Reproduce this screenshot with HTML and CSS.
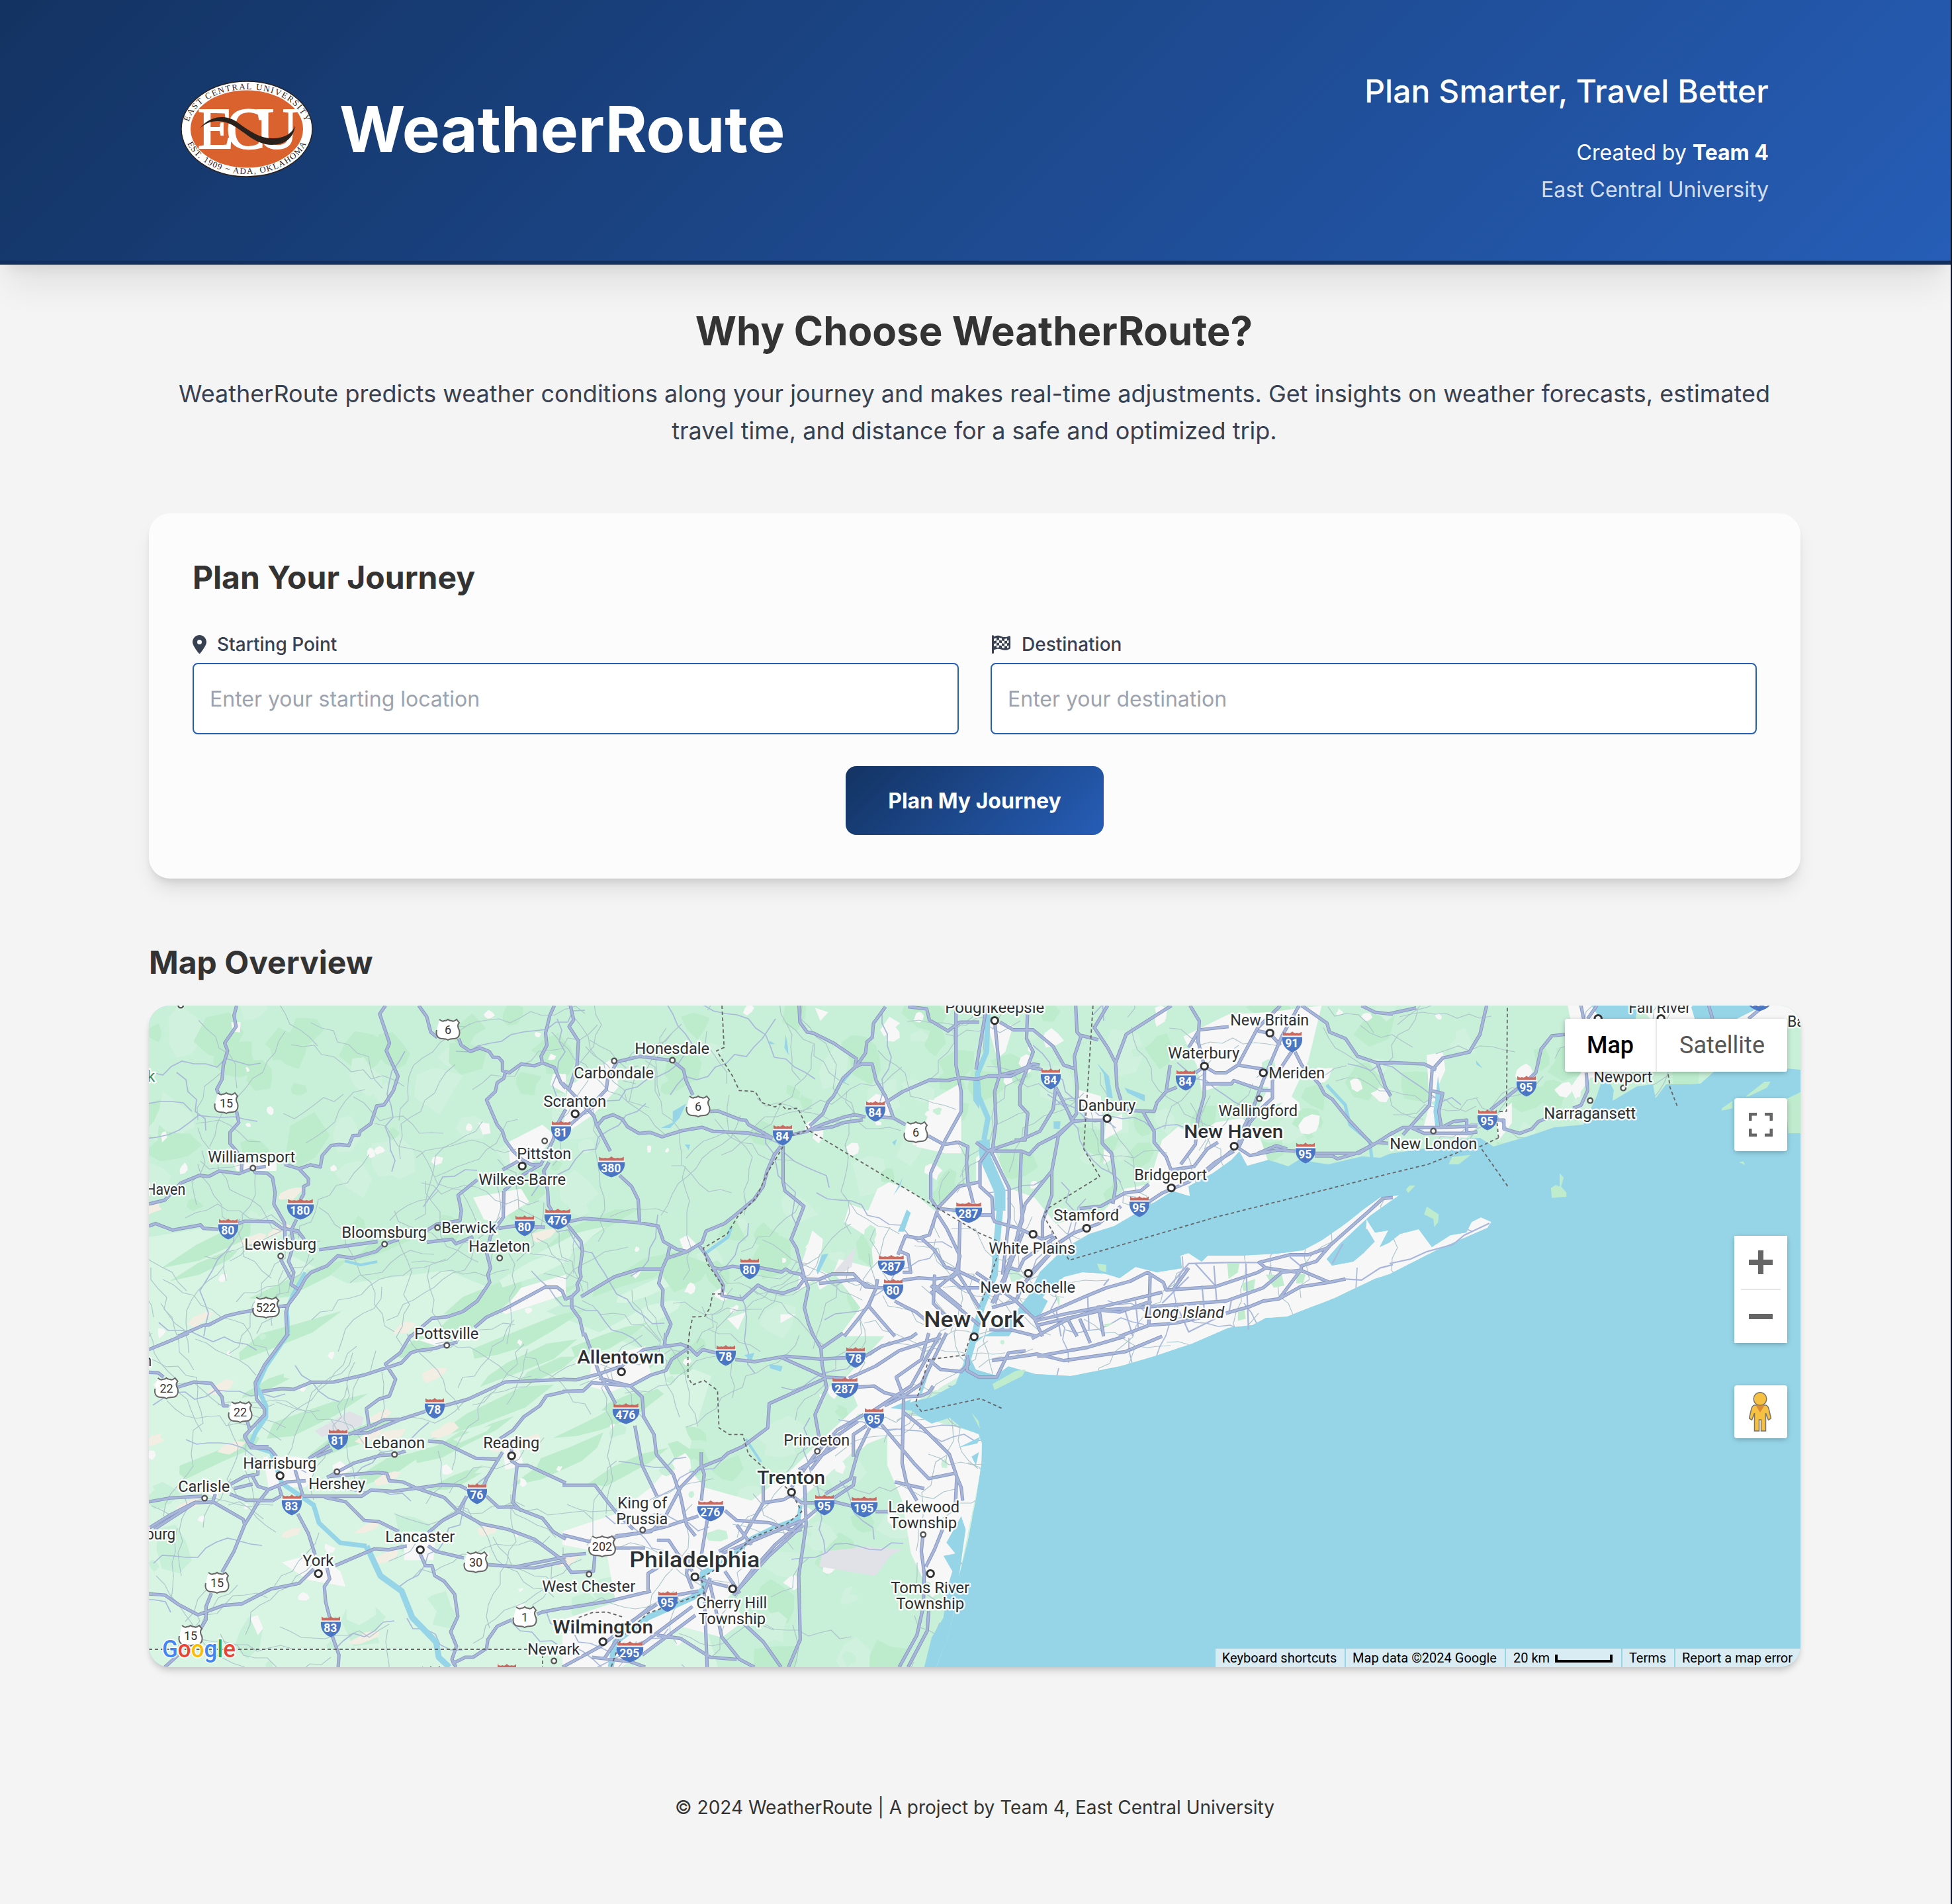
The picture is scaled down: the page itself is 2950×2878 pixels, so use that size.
FILE: index.html
```html
<!DOCTYPE html>
<html lang="en">
<head>
<meta charset="utf-8">
<title>WeatherRoute</title>
<link rel="stylesheet" href="styles.css">
</head>
<body>
<div class="page">
<header class="site-header">
  <div class="header-inner">
    <div class="brand">
      <svg class="seal" viewBox="0 0 200 146" role="img" aria-label="East Central University">
        <defs>
          <path id="arc-top" d="M12 64A89 60 0 0 1 188 64"/>
          <path id="arc-bottom" d="M8 90A95 68 0 0 0 192 90"/>
        </defs>
        <ellipse cx="100" cy="73" rx="99" ry="72" fill="#fff" stroke="#2b211c" stroke-width="1.500"/>
        <ellipse cx="100" cy="73" rx="85" ry="58.500" fill="#d9622f"/>
        <text class="seal-ring"><textPath href="#arc-top" startOffset="50%" textLength="214">EAST CENTRAL UNIVERSITY</textPath></text>
        <text class="seal-ring"><textPath href="#arc-bottom" startOffset="50%" textLength="212">EST. 1909 ~ ADA, OKLAHOMA</textPath></text>
        <g class="seal-letters"><text x="26" y="102">E</text><text x="69" y="102">C</text><text x="114" y="102">U</text></g>
        <path d="M29 72C44 53 68 50 86 63C108 79 122 88 142 87C158 86 168 80 173 68C171 86 158 97 138 97C112 97 94 74 74 65C57 58 42 60 29 72Z" fill="#2b211c"/>
      </svg>
      <h1>WeatherRoute</h1>
    </div>
    <div class="tagline">
      <p class="slogan">Plan Smarter, Travel Better</p>
      <p class="credit">Created by <b>Team 4</b></p>
      <p class="school">East Central University</p>
    </div>
  </div>
</header>
<main>
  <section class="intro">
    <h2>Why Choose WeatherRoute?</h2>
    <p>WeatherRoute predicts weather conditions along your journey and makes real-time adjustments. Get insights on weather forecasts, estimated travel time, and distance for a safe and optimized trip.</p>
  </section>
  <section class="card">
    <h3>Plan Your Journey</h3>
    <div class="fields">
      <div class="field">
        <label for="start"><svg class="pin" viewBox="0 0 384 512"><path d="M215.700 499.200C267 435 384 279.400 384 192C384 86 298 0 192 0S0 86 0 192c0 87.400 117 243 168.300 307.200c12.300 15.300 35.100 15.300 47.400 0zM192 128a64 64 0 1 1 0 128 64 64 0 1 1 0-128z"/></svg>Starting Point</label>
        <input id="start" type="text" placeholder="Enter your starting location">
      </div>
      <div class="field">
        <label for="dest"><svg class="flag" viewBox="0 0 28 28"><path fill-rule="evenodd" d="M0 1.500A1.400 1.400 0 0 1 3 1.500V2.300C8 .2 11 .6 15 2.200C19 3.700 22 3.200 25.500 1.500C27 .8 28 1.600 28 3V19C28 20 27.500 20.600 26.800 21C22 23.400 18.500 23.200 14.500 21.700C10.500 20.300 7.500 20.400 3 22.500V26.500A1.400 1.400 0 0 1 0 26.500ZM3 9.200 7 8V4.200L3 5.400ZM7 8V12L11 11.500V7.600ZM3 13.200V17L7 15.800V12ZM11 11.500V15.400L7 15.800V19L11 18.400V15.400L15 16V12.200ZM11 3.800V7.600L15 8.200V4.800ZM15 8.200V12.200L19 13V9.200ZM19 5.800V9.200L23 8.600V5ZM19 13V16.900L15 16V19L19 20V16.900L23 16.400V12.600ZM23 8.600V12.600L25.500 11.800V7.800ZM23 16.400V20L25.500 19V15.600Z"/></svg>Destination</label>
        <input id="dest" type="text" placeholder="Enter your destination">
      </div>
    </div>
    <button class="submit" type="button">Plan My Journey</button>
  </section>
  <section class="overview">
    <h3>Map Overview</h3>
    <div class="map">
      <svg class="canvas" viewBox="0 0 2496 1000">
        <defs>
          <path id="mainland" d="M0 0H2180L2200 30 2215 60 2230 110 2240 60 2250 0H2330L2345 50 2360 70 2400 20 2440 0H2496V97L2440 92 2373 93 2345 118 2317 119 2293 119 2277 140 2273 119 2249 122 2212 144 2214 128 2200 100 2188 137 2168 180 2124 184 2076 200 2032 213 2012 200 1975 202 1935 215 1875 224 1861 230 1833 228 1782 240 1738 233 1722 243 1692 233 1660 242 1648 220 1636 233 1608 253 1571 273 1573 288 1547 280 1507 305 1459 333 1421 345 1383 367 1346 403 1330 437 1310 463 1282 490 1247 505 1236 528 1219 572 1183 592 1156 598 1125 608 1152 612 1167 623 1183 632 1210 623 1228 638 1254 648 1259 662 1258 692 1250 745 1237 812 1223 868 1216 922 1205 962 1190 1000H0Z"/>
          <path id="island" d="M1300 500 1320 470 1336 457 1358 433 1383 410 1411 403 1443 405 1467 412 1491 395 1523 403 1561 397 1559 378 1571 374 1591 387 1600 378 1652 378 1704 375 1744 370 1772 355 1804 333 1837 307 1861 290 1889 287 1873 298 1845 318 1829 333 1800 360 1780 383 1788 393 1820 387 1837 373 1840 323 1853 343 1873 340 1860 365 1875 358 1891 345 1919 338 1939 365 1967 347 1991 343 1999 327 2013 320 2029 327 2023 336 1947 369 1875 406 1853 413 1792 442 1720 470 1688 472 1668 483 1632 487 1579 510 1520 530 1468 545 1393 560 1340 557 1299 545 1280 559 1250 550 1236 521 1262 500Z"/>
          <clipPath id="land-clip"><use href="#mainland"/><use href="#island"/></clipPath>
          <g id="roads">
            <path transform="matrix(.4018 0 0 .3333 0 -10)" d="M330 30 320 75 328 125 285 200 296 235 280 300 275 365 255 410 270 450M330 510 338 560 305 605 305 655 330 690 350 735 348 780M890 30 868 68 905 200 893 235 937 350 920 415 885 480 857 485 835 565 795 600 790 618 767 620 752 665 715 660 685 665 652 710 645 762 608 752 565 770 600 815 600 840 582 850 582 885 570 910M0 930 60 912 120 835 190 800 225 805 265 780 340 792 391 768 440 760M510 750 565 770M391 768 400 788 445 790 465 810 475 880 470 930 510 1015 512 1090M0 1030 25 1018 45 1028 90 1048 195 1025 205 1040 262 1045M335 1020 360 1008 465 1010 500 1040 560 1052 585 1090M640 1137 860 1100M1045 1103 1140 1090 1155 1110 1220 1078M555 1000 535 1050 545 1110 525 1190 545 1240 535 1295 560 1315M495 1180 535 1270M520 1530 515 1420 525 1385 560 1330 590 1265 610 1240 670 1210 710 1165 765 1175 855 1145 886 1112 940 1090M520 1390 490 1395M395 1412 345 1422 290 1438 225 1478 205 1480 110 1530M1015 30 1045 80 1060 150 1085 175M1165 180 1175 210 1210 238 1245 222 1280 238 1295 265 1315 265 1330 285 1330 325 1355 335 1400 295 1450 303 1480 290 1525 310 1550 380 1568 405M1525 30 1508 75 1492 155 1497 210 1475 260 1480 290M1340 335 1335 360 1310 380 1303 420 1270 458 1310 570 1330 600 1340 640 1370 690 1405 730 1440 752 1470 750M1390 735 1330 775M1235 820 1163 890 1175 960 1170 1005 1085 1020 1045 1050M1335 870 1333 990 1315 1020 1285 1075 1270 1150 1285 1220 1275 1250 1282 1285 1235 1370 1180 1418 1120 1442 1065 1448 985 1530M1315 1040 1375 1030 1490 1035M1568 500 1540 560 1520 640 1475 750 1410 795 1335 870M1505 740 1485 780 1500 870 1503 935 1520 970M1225 1490 1270 1443 1340 1405 1490 1307 1535 1307 1555 1325 1568 1365"/>
            <path transform="matrix(.4018 0 0 .3333 625 -10)" d="M30 30 42 95 25 125 60 190 55 300 25 410M95 500 165 410 170 365 205 285 290 260 413 279 455 320 465 370 490 435M555 510 585 508 670 548 690 550 700 570 790 630M0 380 95 500 20 580M95 500 118 530 130 575 180 690M130 575 155 540 190 525 225 545 245 580 288 610 330 605 375 625 450 597 525 582 565 600 700 608 790 632M865 615 920 600 935 590 975 570 1060 535 1100 525 1140 535M935 595 1015 580 1060 560 1130 548M890 30 893 105 920 150 945 155 1020 200 1105 270 1100 310 1125 295 1165 295 1180 370 1215 440 1235 505 1245 540 1290 570M1375 620 1435 660M1215 35 1170 110 1165 175 1145 195 1140 245 1105 305 1055 360 1020 440 1000 465 980 520 930 575M1215 470 1280 420 1380 368 1450 370 1490 357 1568 365M1200 535 1245 540M830 665 830 830 837 870 908 940 860 1090 880 1130 908 1255 925 1310 910 1400 925 1470 945 1530M820 670 795 710 770 780 755 850 720 910 650 980 610 1018 540 1053 525 1105 470 1145 430 1135 380 1100 360 1030 290 1015 80 995 20 1010M215 800 260 850 285 910 290 1015M20 1025 70 1100 75 1145 65 1230 70 1260 55 1295 60 1320 35 1350 10 1362M35 1350 35 1400 65 1450 80 1530M70 1350 195 1260 290 1225 375 1225M403 1125 395 1170 375 1225 362 1290 378 1320 375 1390 408 1475 390 1530M395 1175 470 1145M515 1120 545 1170 605 1300 600 1345 675 1363 735 1298 770 1320 830 1335 885 1310 910 1270M570 1220 595 1225 640 1212 670 1218M740 1218 825 1238 840 1225 860 1240 895 1248 910 1270 965 1272 1015 1247 1095 1247 1140 1305 1210 1310M965 1290 1105 1272 1160 1305M1280 1275 1340 1265 1400 1270 1470 1260 1490 1235 1568 1280M1480 30 1480 300 1500 420 1500 510 1440 640 1385 790 1385 905 1410 950 1490 960M1410 950 1490 850 1568 830M1410 960 1380 1070 1340 1085 1290 1075 1262 1160M1410 975 1445 1040 1495 1165 1480 1240 1385 1335M1345 1080 1400 1140 1440 1215 1490 1235M1250 1370 1280 1390 1330 1420 1380 1470M1180 1310 1150 1390 1120 1440 1060 1530M1150 1390 1200 1460 1250 1530M1435 660 1490 650 1525 670 1520 740 1525 830 1545 925M1300 35 1370 45 1380 95 1450 145 1495 105 1568 105M1400 1250 1395 1380 1450 1450M1400 1300 1500 1400M1495 1010 1490 1250 1568 1400M1385 1300 1480 1390 1568 1480M1460 1270 1500 1310 1568 1310M1185 1270 1180 1310M1280 1240 1310 1240 1300 1160 1262 1140"/>
            <path transform="matrix(.4018 0 0 .3333 1250 -10)" d="M0 365 45 350 130 350 200 310 250 320M90 345 160 325 215 295 240 300M40 30 0 320M70 98 90 340 70 420 75 560 60 700 125 860 125 990 100 1250M90 105 140 140 215 140 290 215 330 300 370 315M375 30 380 150 395 170 370 260 380 400 378 520 360 550M395 165 460 185M495 30 445 130 495 220 525 290 530 400 545 460M735 30 650 95 565 160 540 240 525 290M300 400 365 555 410 550 475 550 475 655 510 700 520 790 525 850 515 930M365 555 310 620 285 780 285 890 250 1010 250 1080M300 400 290 500 240 600 165 640M195 30 190 180 215 240 165 400 165 480 195 520 185 640 145 640M0 650 45 690 170 690 200 705 235 660 300 620 365 555M45 690 15 740 15 850 60 900 65 1000M165 640 90 670 45 690M555 505 670 510 680 470 715 420 755 400M825 335 860 306 900 335 940 335 985 300 1080 318M625 505 670 600 670 650 715 715 735 780M860 315 858 440 835 540 825 660 770 750M730 300 715 420M805 30 840 100 835 190 859 306M800 220 840 140 950 125M1060 145 1105 156 1145 210M1145 30 1060 130 985 300M1215 30 1150 170 1080 370 1050 470 1020 550 1000 600 985 670M1195 225 1115 370 1115 450 1070 500 1030 560 990 670M1200 240 1225 300 1290 385 1310 430 1340 455 1400 545 1490 660M1225 30 1320 110 1330 150 1390 180 1435 260 1510 290 1568 290M1510 290 1540 400 1560 440M1450 30 1500 60 1568 70M985 675 1030 710 1135 685 1200 690M1060 700 1130 665 1170 680M1275 700 1440 700 1510 650 1568 605M1275 712 1340 712 1360 725 1430 700 1510 650 1550 655M860 385 960 385 970 370 1080 415 1115 415M970 690 900 740 860 780 800 830 700 880 650 920M545 940 460 1020 370 1060 320 1100 200 1250M735 775 820 760 870 680 910 650M870 780 970 680M390 950 470 940 560 880 620 870 650 840M0 980 60 980 70 1010 160 1040 250 1090 290 1070M170 700 165 860 175 1000 150 1100 110 1250 70 1380M285 780 185 930 160 1050 130 1200 60 1380M180 1050 130 1200 90 1340M320 1100 180 1290 150 1370 60 1400M110 1215 160 1230 180 1180 300 1080M220 1460 330 1430 460 1400 580 1365 700 1330M220 1450 410 1350 490 1310 580 1280 645 1240 705 1285 715 1320 900 1305 1060 1240 1090 1220 1065 1195 1180 1160 1250 1160 1320 1130 1480 960 1530 905 1568 900M230 1480 480 1410 660 1395 940 1370 1080 1310 1150 1240 1220 1230 1330 1285 1390 1270M940 1425 1030 1395 1080 1370 1140 1360 1220 1305 1330 1285M1090 1220 1150 1230 1215 1240 1140 1360M1330 1120 1280 1190 1225 1210 1220 1240M460 1390 480 1530M655 1245 650 1480M540 1530 650 1480 750 1470 900 1430M340 1440 380 1530M800 1220 740 1320M210 1540 350 1450 460 1410 540 1420 660 1370M0 1240 60 1290 150 1370 220 1450 250 1530M390 1450 430 1560M50 1500 130 1500 230 1530M230 1620 420 1580 560 1530M60 1640 230 1610 330 1640 560 1600 700 1530"/>
            <path transform="matrix(.4018 0 0 .4464 1875 -10)" d="M0 50 100 30M365 22 340 120 300 180 200 200 160 240 150 360 50 460M0 215 130 220 175 240M660 120 610 125 570 170 550 250 500 290 380 375M0 460 50 435 190 435 330 430M80 435 130 455 290 455 330 450M405 410 430 410 430 440 490 455 535 440 560 415 600 400M155 310 200 320 185 380 195 435 240 415 290 410 290 450M720 22 730 67M780 22 745 67M740 250 745 310 720 360 690 370M1200 22 1215 67M1410 22 1350 67"/>
            <path transform="matrix(.4018 0 0 .3333 0 495)" d="M0 75 150 0M0 178 35 180 55 200M110 245 170 222 235 228 275 290 280 330 300 330M370 400 380 440 360 470 385 520 455 525 480 560M525 0 435 145 400 225 405 300 435 345 435 370 360 465 375 500 400 515 450 515M425 265 500 252 545 255 610 223 695 222 810 190 950 135 985 90 1010 80 1075 70 1160 40M985 10 945 90 890 140 928 210 905 285 865 300 818 342 828 425M600 570 680 510M630 560 690 530M750 460 830 425 885 393 950 390 1040 355M770 455 825 452 940 395M1110 330 1200 300 1340 222 1568 210M1568 265 1495 285 1470 330 1410 380 1370 440 1320 480M1050 490 1105 495 1230 568 1310 572M670 655 770 590 870 555 923 551 965 535M0 765 80 748 200 740M0 885 80 825 170 770 240 765 250 730M20 890 180 765M240 765 355 845 360 870 320 990 275 1085M235 1180 215 1240 215 1300 195 1340M305 730 365 758 465 760 495 740M300 690 360 650 410 640 410 600M390 650 410 695 450 710 520 675 590 670M320 705 390 685M450 710 410 770 360 870M490 700 500 740M680 650 860 632 895 637 905 670 955 675 1010 705 1110 745 1160 805 1250 865 1350 890 1450 935 1568 1040M580 740 800 740 835 712 920 718 1100 688 1170 692 1200 710M660 745 740 765 810 850 865 855 940 900M550 620 580 740M560 820 600 910 625 1005M1270 740 1315 790 1370 788 1480 840 1520 900 1568 935M1385 600 1370 770 1400 805M1330 540 1270 660 1260 690M1195 740 1160 815 1105 850 1050 905M1364 480 1364 580 1390 600 1425 600 1568 680M700 1055 850 978 900 983 970 965M1050 965 1080 990 1185 1020M1275 1050 1380 1060 1568 1015M1380 1062 1450 1065 1568 1035M1020 1000 1040 1055 1065 1055 1075 1100 1110 1125 1150 1185 1162 1285 1135 1355 1157 1420 1140 1480 1155 1515M670 1065 680 1115 660 1150 665 1220 680 1290M690 1375 715 1460 712 1515M0 1183 60 1188 110 1230 185 1278 280 1235 350 1228 460 1160 565 1135 620 1070M60 1515 110 1460M1140 1500 1190 1470 1220 1470 1270 1430 1275 1390 1310 1330 1365 1300M1460 1275 1480 1265 1568 1245"/>
            <path transform="matrix(.4464 0 0 .3333 625 495)" d="M75 0 100 90 125 185 180 320M245 420 270 600 320 740M0 210 45 212 125 185 200 150 275 75 400 50 430 65 455 100 475 75 520 90M350 0 345 60M0 265 70 262 100 225 230 240 300 190 350 170 370 120 430 65M125 205 230 240 270 290 275 380 310 460 318 550 375 640 400 740 420 870 450 920M585 120 650 130 755 105 870 118 960 112M1025 105 1080 60 1180 20 1200 0M845 0 875 70 880 150 895 250 855 370 870 480M875 70 950 0M740 110 890 200 960 205M890 205 700 320 695 430 610 515 560 545 540 570 465 610 400 700 345 840 300 900 180 920M970 205 1060 150 1140 80 1280 20M1000 245 1055 240 1090 270 1150 290 1215 285 1240 270 1255 240M1280 0 1180 240 1060 345M1300 0 1215 230 1150 290 1090 330M1240 0 1215 120 1130 200 1155 290 1155 360 1220 430 1310 550 1335 650 1330 780M1155 290 1150 590 1165 680 1200 760M1080 415 1190 590 1240 660 1330 635 1350 700 1355 760M1040 430 1000 540 975 660 890 730M1030 420 985 460 985 560M1020 370 930 440 850 560 775 700M905 510 840 620M1000 400 925 470 930 510 800 620M470 540 470 600 480 640 470 760M550 805 590 850 700 860 790 900 810 890M775 735 810 770 860 770M920 765 980 785M1060 810 1110 810M820 690 825 870 800 1100 805 1390 765 1515M990 650 985 690 860 800 720 960 640 1080 580 1190M810 850 540 1000M815 870 700 1010 590 1170M0 690 110 690 150 760 180 810 240 890M460 830 345 880 250 910 90 945 0 915M320 940 360 940 390 1000 440 1080M530 990 610 930 680 770 750 755 775 735M680 680 680 770M450 1110 500 1130 560 1150M500 1110 480 1180 490 1515M0 1250 160 1215 300 1170M140 1480 220 1320 320 1230M0 1515 130 1420 300 1240M380 1190 460 1170M500 1140 540 1380 600 1480 650 1515M600 1300 680 1400 740 1515M440 1240 260 1420M270 1460 450 1280M320 1370 400 1385 500 1470 590 1480M1220 920 1215 990 1225 1090 1222 1240 1200 1370 1140 1515M1290 880 1260 980 1230 1060M1240 1260 1235 1350 1170 1515M1125 675 1225 705M100 1470 230 1490 280 1515M0 1010 80 1000M0 1030 30 1085 105 1080 110 1000M1370 120 1370 170 1410 200 1470 200 1510 90 1568 80M1240 120 1280 165 1350 175 1375 140 1370 100M590 870 640 960M490 850 470 1010M550 1080 600 1180M180 975 280 975M430 1000 420 1090 440 1160M290 1170 290 1090 340 1050"/>
          </g>
        </defs>
        <use href="#mainland" fill="#c8efd8"/>
        <g clip-path="url(#land-clip)">
          <path d="M0 350 120 330 300 420 450 400 620 470 850 560 790 760 860 1000H0Z" fill="#d8f4e3"/>
          <g id="terrain"></g>
          <g class="urban">
            <path transform="matrix(.4018 0 0 .3333 625 -10)" d="M1185 860 1230 830 1310 870 1400 960 1480 860 1568 820V1530H1040L1120 1400 1020 1240 1040 1180 1170 1220 1160 1090 1060 1010 1080 930 1150 960ZM1400 450 1500 380 1500 700 1440 700 1330 670ZM1140 470 1180 430 1230 450 1230 540 1150 520ZM20 400 200 260 210 400 120 520 0 620ZM920 560 940 550 945 600 910 600ZM940 1050 980 1090 960 1260 880 1330 900 1200ZM440 1090 470 1070 510 1120 460 1150ZM1195 140 1230 80 1270 110 1210 170ZM950 40 1000 60 970 100ZM620 1450 690 1420 660 1500ZM820 1430 880 1430 820 1470Z"/>
            <path transform="matrix(.4018 0 0 .3333 1250 -10)" d="M0 720 60 660 130 860 220 900 300 1020 480 960 560 860 650 840 700 640 760 580 830 620 900 560 1000 540 1060 600 1100 740 600 1000 330 1150 200 1568H0ZM490 560 550 520 550 590 480 640ZM780 170 950 70 1100 60 1300 30 1250 280 1180 460 1060 500 1100 400 950 380 850 420 830 300ZM380 410 470 440 475 550 410 550ZM40 100 140 120 110 240 80 270ZM480 680 520 720 480 750Z"/>
            <path transform="matrix(.4018 0 0 .4464 1875 -10)" d="M140 190 200 180 210 240 170 320 180 430 330 430 290 470 120 460 150 360ZM670 22H880L760 260 700 340 680 300 720 250ZM400 400 460 350 460 420 410 480ZM940 22H1546V67H980Z"/>
            <path transform="matrix(.4464 0 0 .3333 625 495)" d="M1100 0H1568V180L1340 200 1170 330 1130 450 1000 520 900 640 800 760 860 820 700 1000 560 1200 620 1300 540 1380 400 1330 200 1515H0V1300L180 1220 150 1000 0 960V900L180 820 300 700 340 640 420 600 480 700 640 760 760 640 880 480 1000 330 960 200ZM1100 340 1420 460 1420 600 1340 1120 1300 1150 1250 1200 1180 1000 1150 760 1100 600ZM100 120 280 60 300 190 160 270 90 240Z"/>
            <path transform="matrix(.4018 0 0 .3333 0 495)" d="M430 560 560 560 640 600 590 700 450 700ZM500 1040 620 1000 720 1080 740 1150 600 1120ZM960 900 1080 900 1070 1030 960 1030ZM1330 480 1380 470 1410 600 1340 620ZM690 600 720 580 760 620 700 660ZM180 710 260 700 260 750ZM380 1290 410 1280 430 1340 410 1370ZM1010 30 1130 20 1110 70Z"/>
            <path transform="matrix(.4018 0 0 .3333 0 -10)" d="M1220 900 1400 860 1430 920 1310 1010 1260 1000ZM1350 650 1480 570 1530 620 1440 740 1360 760ZM320 750 480 730 480 780 330 780ZM1330 1420 1400 1310 1568 1250 1568 1340 1340 1430ZM1520 340 1568 340V430L1510 390ZM310 105 345 105 343 152 315 148ZM1240 560 1280 565 1285 610 1255 615Z"/>
          </g>
          <use href="#island" fill="#f7f7f7"/>
          <g id="patches"></g>
          <path fill="#e1e1e8" d="M1018 825 1085 818 1138 822 1120 832 1098 862 1013 848ZM251 643 303 613 325 623 321 635 261 652ZM1036 402 1068 365 1062 395 1040 410Z"/>
          <g id="lanes" class="lanes"></g>
        </g>
        <g fill="#96d5e8">
          <path transform="matrix(.4464 0 0 .3333 625 495)" d="M1350 830 1365 890 1340 1130 1322 1290 1300 1400 1265 1515H1225L1250 1380 1290 1290 1300 1170 1320 1080 1290 1010 1330 1000 1300 950ZM1340 520 1415 470 1405 500ZM1385 560 1410 540 1400 600ZM1110 340 1180 300 1170 350ZM700 140 745 150 740 175 703 160ZM615 100 650 90 640 125Z"/>
          <path transform="matrix(.4018 0 0 .3333 625 -10)" d="M415 510 465 475 440 540 405 585 370 585 415 560ZM840 160 848 220 850 255 835 220ZM1060 350 1095 325 1055 385ZM1545 370 1568 300V500L1545 460ZM955 1230 975 1160 1000 1155 960 1250ZM1245 890 1280 810 1270 850ZM1295 955 1310 970 1285 1055 1262 1055ZM1240 650 1258 635 1250 665ZM460 660 480 660 475 685ZM780 190 800 205 775 205Z"/>
          <path transform="matrix(.4018 0 0 .3333 1250 -10)" d="M455 290 500 350 515 450 495 450 480 340ZM558 402 635 435 635 465 570 425ZM292 555 318 555 315 590 292 588ZM195 1400 220 1330 270 1370 240 1440 200 1440ZM1430 1120 1470 1040 1500 1100 1460 1150Z"/>
          <path transform="matrix(.4018 0 0 .4464 1875 -10)" d="M325 207 350 235 327 222ZM182 260 192 330 185 430 172 430 165 380 175 320Z"/>
        </g>
        <g class="rivers">
          <path stroke-width="8" d="M1268 0 1266 70 1252 103 1254 137 1268 170 1262 203"/>
          <path stroke-width="17" d="M1262 203 1264 230 1286 280 1286 310"/>
          <path stroke-width="10" d="M1286 310 1280 373 1278 407 1258 457 1246 505 1236 540"/>
          <path stroke-width="7" d="M211 495 177 545 163 575 177 605 177 622 161 645 153 665 185 675 201 722 249 755 257 782 289 812 329 817"/>
          <path stroke-width="9" d="M329 817 350 862 382 885 398 925 434 962 438 985 454 1000"/>
          <path stroke-width="5" d="M236 403 217 437 209 457 211 495M1780 120 1808 150 1815 180 1845 205 1848 230M840 375 875 350 880 335"/>
          <path stroke-width="9" d="M698 1000 705 962 754 925 821 895 839 882 837 858 857 848"/>
          <path stroke-width="6" d="M857 848 893 822 911 805 946 788 982 775 985 755"/>
          <path stroke-width="4" d="M296 386 320 392 345 387M1185 535 1175 560 1165 590M902 655 925 690"/>
        </g>
        <g fill="#bfeccd">
          <path transform="matrix(.4018 0 0 .4464 1875 -10)" d="M607 640 625 630 640 635 640 590 655 605 645 635 665 655 665 670 610 674ZM222 560 235 535 305 528 260 560ZM62 645 75 632 97 632 70 657ZM130 730 140 703 185 730 183 755 168 773 165 745ZM1340 330 1410 280 1433 280 1420 300 1350 330ZM1250 370 1290 345 1290 370 1250 378ZM1490 340 1546 315V455L1500 455ZM1315 553 1330 550 1338 562Z"/>
          <path transform="matrix(.4018 0 0 .3333 1250 -10)" d="M945 1200 990 1200 985 1240 950 1270ZM1000 1290 1050 1270 1045 1320 1005 1325ZM1090 1250 1150 1250 1160 1300 1120 1310ZM1205 1240 1240 1250 1230 1290 1205 1290ZM480 1475 515 1470 490 1490ZM455 1200 490 1205 490 1240 465 1230ZM300 1340 315 1360 312 1400ZM985 1420 1010 1410 1015 1450 985 1460Z"/>
          <path d="M1275 572 1310 552 1325 550 1320 560 1278 581ZM1243 615 1256 640 1254 628Z"/>
        </g>
        <path class="minor" d="M1875 390 1907 383 1931 372 1971 361 1988 347 2026 329"/>
        <path class="minor" transform="matrix(.4018 0 0 .3333 1250 -10)" d="M715 1320 800 1200 950 1195 1065 1195M825 1200 900 1300M1015 1200 1025 1500M895 1210 905 1370M420 1350 425 1500M600 1370 610 1490M850 1300 860 1430M755 1390 800 1510 900 1450M700 1380 800 1260M480 1300 500 1270M1390 1270 1450 1275 1520 1220 1568 1205M1380 1110 1340 1200M960 1370 950 1430M300 1400 320 1530M560 1410 590 1530M1180 1170 1230 1220"/>
        <use href="#roads" class="road-edge"/>
        <use href="#roads" class="road-core"/>
        <g class="borders">
          <path transform="matrix(.4018 0 0 .3333 625 -10)" d="M600 30 608 220 580 235 640 350 665 415 725 420 750 470 800 490 820 475 840 500 885 495 925 595 1568 1062 1642 1100M860 620 925 595M830 670 770 790 730 900 660 985 620 1065 530 1130 545 1200 605 1305 600 1338 565 1338 555 1400 535 1440 490 1442 475 1530"/>
          <path transform="matrix(.4464 0 0 .3333 625 495)" d="M430 0 425 60 425 200 440 235 480 215 525 260 530 430 565 460 610 460 630 550 690 620 775 722 810 810 760 865 640 930 560 1040 470 1110 480 1180 290 1270 200 1380 165 1515M1380 20 1360 100 1240 120 1195 320 1215 355 1415 297 1490 343M55 1290 100 1268 150 1265 210 1290"/>
          <path transform="matrix(.4018 0 0 .3333 1250 -10)" d="M440 30 405 680 465 805 270 950 255 985 350 1185 900 990 1555 792 1700 750 1825 690M85 1150 20 1380"/>
          <path transform="matrix(.4018 0 0 .4464 1875 -10)" d="M410 470 340 500 445 635M443 30 440 380 400 382 410 470M1048 255 1055 300 1083 365"/>
          <path d="M0 973H595V1000"/>
        </g>
        <g id="shields"></g>
        <g id="towns" transform="translate(-.8 -.4)"></g>
        <text class="logo" x="20" y="985" textLength="111" lengthAdjust="spacingAndGlyphs"><tspan fill="#4285f4">G</tspan><tspan fill="#ea4335">o</tspan><tspan fill="#fbbc05">o</tspan><tspan fill="#4285f4">g</tspan><tspan fill="#34a853">l</tspan><tspan fill="#ea4335">e</tspan></text>
      </svg>
      <div class="map-type"><button class="active">Map</button><button>Satellite</button></div>
      <button class="tool fullscreen"><svg viewBox="0 0 36 36"><path d="M0 0H12V4.500H4.500V12H0ZM24 0H36V12H31.500V4.500H24ZM0 24H4.500V31.500H12V36H0ZM31.500 24H36V36H24V31.500H31.500Z"/></svg></button>
      <div class="tool zoom">
        <button><svg viewBox="0 0 36 36"><path d="M14 0H22V14H36V22H22V36H14V22H0V14H14Z"/></svg></button>
        <button><svg viewBox="0 0 36 36"><path d="M0 14H36V22H0Z"/></svg></button>
      </div>
      <button class="tool pegman"><svg viewBox="0 0 34 60"><g fill="#f6c143" stroke="#7a7468" stroke-width="1.500"><path d="M9 20H25C28 20 29 22 30 25L33.500 40 29.500 42.500 25.500 32V59H18.500V42H15.500V59H8.500V32L4.500 42.500 .500 40 4 25C5 22 6 20 9 20Z"/><circle cx="17" cy="10.500" r="9.800"/></g><path d="M10.500 20.500H23.500L17 31Z" fill="#dd8a35"/></svg></button>
      <div class="attribution"><span>Keyboard shortcuts</span><span>Map data ©2024 Google</span><span>20 km <i class="scale"></i></span><span>Terms</span><span>Report a map error</span></div>
    </div>
  </section>
</main>
<footer>© 2024 WeatherRoute | A project by Team 4, East Central University</footer>
</div>
<script src="map.js"></script>
</body>
</html>
```

FILE: styles.css
```css
* { box-sizing: border-box; margin: 0; }
body { background: #0b1526; font-family: Inter, sans-serif; color: #333; }
button, input { font-family: inherit; border: 0; }
.page { width: 2948px; height: 2878px; padding-right: 2px; background: #f4f4f4; overflow: hidden; }
.site-header { height: 400px; margin-right: -2px; padding-right: 2px; border-bottom: 6px solid #12305f; background: linear-gradient(135deg, #133362, #265db6); color: #fff; box-shadow: 0 40px 50px -10px rgba(0,0,0,.08), 0 16px 20px -12px rgba(0,0,0,.08); }
.header-inner { width: 2496px; height: 394px; margin: 0 auto; padding: 0 48px; display: flex; justify-content: space-between; align-items: center; }
.brand { display: flex; align-items: center; gap: 40px; padding-bottom: 5px; }
.seal { width: 200px; height: 146px; display: block; }
.seal-ring { font: 13px "Liberation Serif", serif; fill: #2b211c; text-anchor: middle; }
.seal-letters { font: 88px "Liberation Serif", serif; fill: #fff; stroke: #fff; stroke-width: 2px; }
h1 { font-size: 96px; line-height: 96px; font-weight: 700; }
.tagline { text-align: right; padding-top: 22px; font-size: 32px; line-height: 48px; }
.slogan { font-size: 48px; line-height: 64px; font-weight: 500; letter-spacing: .06px; margin-bottom: 37px; }
.school { margin-top: 8px; opacity: .8; }
main { width: 2496px; margin: 0 auto; padding-top: 64px; }
.intro { text-align: center; margin-bottom: 97px; }
.intro h2 { font-size: 60px; line-height: 72px; font-weight: 700; margin-bottom: 31px; margin-right: 2px; }
.intro p { font-size: 36px; line-height: 56px; color: #374151; padding: 0 25px 0 24px; }
h3 { font-size: 48px; line-height: 62px; padding-bottom: 2px; font-weight: 700; }
.card { height: 552px; padding: 66px; border-radius: 32px; background: #fcfcfc; box-shadow: 0 20px 30px -6px rgba(0,0,0,.1), 0 8px 12px -4px rgba(0,0,0,.1); margin-bottom: 96px; }
.fields { display: grid; grid-template-columns: 1fr 1fr; gap: 48px; margin: 48px 0; }
.field label { display: flex; align-items: center; height: 40px; margin-bottom: 8px; font-size: 28px; font-weight: 500; color: #374151; }
.field svg { fill: #374151; height: 28px; margin-right: 16px; }
.field .pin { width: 21px; }
.field .flag { width: 28px; margin-left: 2px; margin-right: 17px; }
.field input { display: block; width: 100%; height: 108px; padding: 0 24px; border: 2px solid #265db5; border-radius: 8px; background: #fff; font-size: 32px; }
.field input::placeholder { color: #9ca3af; }
.submit { display: block; width: 390px; height: 104px; margin: 0 auto; border-radius: 16px; background: linear-gradient(135deg, #133362, #265db6); color: #fff; font-size: 32px; font-weight: 700; }
.map { position: relative; height: 1000px; margin-top: 32px; border-radius: 32px; overflow: hidden; background: #96d5e8; box-shadow: 0 8px 12px -2px rgba(0,0,0,.12), 0 4px 8px -2px rgba(0,0,0,.1); }
.canvas { display: block; width: 2496px; height: 1000px; font-family: Roboto, sans-serif; }
.urban { fill: #f7f7f7; }
.rivers { fill: none; stroke: #96d5e8; stroke-linejoin: round; }
.lanes { fill: none; stroke: #adc6cb; stroke-width: 1.2; }
.lanes .main { stroke: #a8b9da; stroke-width: 1.7; }
.minor { fill: none; stroke: #a8b6dc; stroke-width: 2.2; vector-effect: non-scaling-stroke; }
#roads path { vector-effect: non-scaling-stroke; stroke-linejoin: round; }
.road-edge { fill: none; stroke: #8897c4; stroke-width: 5.1px; }
.road-core { fill: none; stroke: #a8b6d8; stroke-width: 3.2px; }
.borders { fill: none; stroke: #666; stroke-width: 1.8px; stroke-dasharray: 5 4; }
.borders path { vector-effect: non-scaling-stroke; }
.town { font-size: 24px; fill: #2b3035; stroke: #fff; stroke-opacity: .9; stroke-width: 5px; paint-order: stroke; stroke-linejoin: round; }
.town.city { font-size: 28px; font-weight: 500; }
.town.metro { font-size: 34px; font-weight: 500; }
.town.area { font-style: italic; }
.town.park { fill: #3b8a63; }
.dot { fill: #fff; stroke: #555; stroke-width: 2.4; }
.dot.big { stroke: #333; stroke-width: 3; }
.num { font-size: 17.5px; font-weight: 700; fill: #fff; text-anchor: middle; }
.num.us { font-weight: 400; font-size: 18px; fill: #333; }
.logo { font: 500 36px Roboto, sans-serif; stroke: #fff; stroke-width: 3px; paint-order: stroke; }
.map-type { position: absolute; top: 20px; right: 20px; width: 336px; height: 80px; display: grid; grid-template-columns: 137px 1fr; background: #fff; border-radius: 4px; overflow: hidden; box-shadow: 0 2px 8px -1px rgba(0,0,0,.3); }
.map-type button { background: #fff; padding: 0; font: 36px Roboto, sans-serif; color: #565656; border-left: 2px solid #e8e8e8; }
.map-type .active { color: #000; font-weight: 500; border-left: 0; }
.tool { position: absolute; right: 20px; width: 80px; height: 80px; padding: 0; display: flex; align-items: center; justify-content: center; background: #fff; border-radius: 4px; box-shadow: 0 2px 8px -1px rgba(0,0,0,.3); }
.tool svg { width: 36px; height: 36px; fill: #666; display: block; }
.fullscreen { top: 140px; }
.zoom { top: 348px; height: 162px; flex-direction: column; border-radius: 0; }
.zoom button { width: 60px; height: 80px; padding: 0 12px; background: none; }
.zoom button + button { border-top: 2px solid #e6e6e6; height: 82px; }
.pegman { top: 574px; }
.pegman svg { width: 34px; height: 60px; margin-right: 2px; }
.attribution { position: absolute; right: 0; bottom: 0; width: 884px; height: 28px; display: grid; grid-template-columns: 195px 240px 174px 78px 1fr; gap: 2px; font: 20px/28px Roboto, sans-serif; color: #000; white-space: nowrap; }
.attribution span { background: #d9ebf3; text-align: center; padding-right: 2px; }
.scale { display: inline-block; width: 87px; height: 12px; margin-left: 3px; border: 4px solid #000; border-top: 0; vertical-align: 0; }
footer { margin-top: 188px; text-align: center; font-size: 28px; line-height: 48px; }
```

FILE: map.js
```js
const NS = 'http://www.w3.org/2000/svg';
function add(parent, tag, attrs, text) {
  const el = document.createElementNS(NS, tag);
  for (const k in attrs) el.setAttribute(k, attrs[k]);
  if (text) el.textContent = text;
  document.getElementById(parent).appendChild(el);
}

// Seeded generator keeps the terrain identical on every load.
let seed = 41;
const rnd = () => (seed = (seed * 16807) % 2147483647) / 2147483647;

function blob(cx, cy, rx, ry, angle) {
  const n = 6 + Math.floor(rnd() * 4), pts = [];
  for (let i = 0; i < n; i++) {
    const t = i / n * 6.283, r = .55 + rnd() * .6;
    const x = Math.cos(t) * rx * r, y = Math.sin(t) * ry * r;
    pts.push((cx + x * Math.cos(angle) - y * Math.sin(angle)).toFixed(1) + ',' + (cy + x * Math.sin(angle) + y * Math.cos(angle)).toFixed(1));
  }
  return pts.join(' ');
}

// Woodland and open fields; ridges in the southwest run diagonally.
for (let i = 0; i < 420; i++) {
  const x = rnd() * 2450, y = rnd() * 1000;
  const ridge = x < 800 && y > 340 && y < 720;
  const farmland = x < 800 && y >= 720;
  const fill = rnd() < (farmland ? .35 : .55) ? (farmland ? '#c8efd8' : '#bdeccd') : (ridge || farmland ? '#d8f4e3' : '#d0f1dd');
  const s = 12 + rnd() * 34;
  add('terrain', 'polygon', { points: ridge ? blob(x, y, s * 2.4, s * .45, -.42) : blob(x, y, s, s * .8, rnd() * 3), fill });
}
for (let i = 0; i < 28; i++) add('terrain', 'polygon', { points: blob(rnd() * 760, 260 + rnd() * 720, 24, 9, -.4), fill: '#f3eee3' });
for (let i = 0; i < 300; i++) {
  const x = rnd() * 2400, y = rnd() * 1000;
  const east = x > 1000 || (x > 700 && y > 600);
  if (!east && rnd() < .55) continue;
  const s = 4 + rnd() * (east ? 15 : 7);
  add('patches', 'polygon', { points: blob(x, y, s, s * .8, rnd() * 3), fill: rnd() < (east ? .6 : .85) || (x > 1330 && y > 370) ? '#f7f7f7' : '#c8efd8' });
}

// Local roads.
for (let i = 0; i < 460; i++) {
  let x = rnd() * 2300, y = rnd() * 1000, a = rnd() * 6.283, d = `M${x.toFixed(0)} ${y.toFixed(0)}`;
  const steps = 4 + rnd() * 9;
  for (let k = 0; k < steps; k++) {
    const turn = a + (rnd() - .5) * 1.3;
    x += Math.cos(turn) * 18; y += Math.sin(turn) * 18;
    d += `L${x.toFixed(0)} ${y.toFixed(0)}`;
  }
  add('lanes', 'path', { d, class: i % 5 ? '' : 'main' });
}

const towns = [
  ['Williamsport', 90, 222, 237], ['Haven', -4, 56, 286], ['Lewisburg', 145, 254, 369], ['Bloomsburg', 292, 421, 351],
  ['Berwick', 443, 526, 344], ['Hazleton', 484, 577, 372], ['Wilkes-Barre', 499, 631, 271], ['Pittston', 557, 639, 232],
  ['Scranton', 597, 692, 153], ['Pottsville', 402, 499, 504], ['Honesdale', 735, 848, 73], ['Carbondale', 643, 764, 110],
  ['New York', 1172, 1324, 486, 'metro'], ['Poughkeepsie', 1204, 1354, 11], ['New Britain', 1635, 1754, 30],
  ['Waterbury', 1541, 1649, 80], ['Meriden', 1693, 1778, 110], ['Danbury', 1405, 1492, 159], ['Wallingford', 1617, 1737, 167],
  ['New Haven', 1565, 1715, 200, 'city'], ['Bridgeport', 1490, 1600, 264], ['Stamford', 1368, 1467, 325],
  ['White Plains', 1270, 1401, 375], ['New Rochelle', 1257, 1401, 434], ['Long Island', 1505, 1626, 472, 'area'],
  ['New London', 1876, 2008, 217], ['Narragansett', 2109, 2248, 171], ['Newport', 2184, 2273, 116], ['Fall River', 2237, 2331, 11],
  ['Barnstable', 2477, 2585, 32], ['Lebanon', 326, 418, 669], ['Reading', 506, 591, 669], ['Harrisburg', 143, 254, 700],
  ['Carlisle', 45, 123, 735], ['Hershey', 242, 328, 731], ['Lancaster', 358, 463, 811], ['York', 233, 280, 847],
  ['burg', -4, 41, 807], ['n', -7, 5, 545], ['West Chester', 595, 736, 886], ['Newark', 573, 652, 981],
  ['Wilmington', 611, 763, 949, 'city'], ['Allentown', 648, 780, 541, 'city'], ['Princeton', 960, 1060, 665],
  ['Trenton', 920, 1023, 723, 'city'], ['King of', 709, 784, 760], ['Prussia', 707, 785, 784], ['Philadelphia', 727, 924, 849, 'metro'],
  ['Cherry Hill', 828, 935, 911], ['Township', 831, 933, 935], ['Lakewood', 1118, 1226, 766], ['Township', 1120, 1222, 790],
  ['Toms River', 1122, 1241, 888], ['Township', 1130, 1233, 912], ['k', -2, 10, 115, 'park']
];
const small = [[157,246],[598,205],[356,361],[436,336],[199,379],[530,382],[48,0],[703,84],[791,83],[1678,141],[1941,190],[2178,144],[2228,125],[450,514],[371,679],[84,745],[284,705],[612,991],[1010,674],[746,793],[1170,800],[665,860]];
const large = [[564,243],[644,164],[1247,501],[1278,23],[1694,42],[1595,92],[1684,102],[1448,171],[1640,213],[1545,276],[1417,337],[1336,346],[1329,405],[2285,20],[2190,20],[548,681],[198,711],[410,823],[256,859],[714,554],[971,736],[825,864],[882,882],[1181,859],[686,962]];
small.forEach(([cx, cy]) => add('towns', 'circle', { cx: cx + 1, cy, r: 3.8, class: 'dot' }));
large.forEach(([cx, cy]) => add('towns', 'circle', { cx: cx + 1, cy, r: 5.2, class: 'dot big' }));
towns.forEach(([name, x1, x2, y, kind]) => add('towns', 'text', { x: x1, y, textLength: x2 - x1, lengthAdjust: 'spacingAndGlyphs', class: 'town ' + (kind || '') }, name));

const interstates = [[81,623,190],[180,229,308],[80,120,338],[80,568,333],[476,618,323],[380,699,244],[84,958,196],[84,1098,160],[287,1239,313],[80,908,398],[287,1122,393],[80,1125,429],[84,1363,111],[84,1567,113],[91,1728,55],[95,1497,304],[95,1748,223],[95,2082,122],[95,2023,173],[195,2434,-7],[78,432,609],[81,286,656],[76,496,738],[83,216,755],[83,275,939],[83,541,1011],[78,872,529],[78,1068,532],[287,1052,578],[476,721,617],[95,1096,624],[276,849,764],[95,1021,755],[195,1081,758],[95,784,901],[295,727,977]];
interstates.forEach(([n, x, y]) => {
  const sx = n > 99 ? 1.34 : 1, t = `translate(${x} ${y}) scale(${sx} 1)`;
  add('shields', 'path', { transform: t, fill: '#fff', d: 'M-15-10H15V-5H-15Z' });
  add('shields', 'path', { transform: t, fill: '#c96a61', d: 'M-14-9.500V-15.500Q-10-12-7-14-3-12 0-16 3-12 7-14 10-12 14-15.500V-9.500Z' });
  add('shields', 'path', { transform: t, fill: '#4a76c4', d: 'M-15-7.500H15C16 4 10 12 0 15.500-10 12-16 4-15-7.500Z' });
  add('shields', 'text', { x: x - .7, y: y + 8, class: 'num' }, String(n));
});
const usRoutes = [[6,452,36],[15,117,147],[522,177,456],[6,830,152],[6,1159,191],[22,26.5,578],[22,138,614],[15,103,872],[15,63,952],[30,494,841],[1,568,924],[202,685,817],[30,426,1015]];
usRoutes.forEach(([n, x, y]) => {
  add('shields', 'path', { transform: `translate(${x} ${y}) scale(${n > 99 ? 1.13 : 1} 1)`, fill: '#fff', stroke: '#666', 'stroke-width': 2, d: 'M-13-15Q-8-11-6-13-2-13 0-15 2-13 6-13 8-11 13-15L17-10Q13-6 17 1C19 9 15 14 9 14Q3 14 0 16-3 14-9 14C-15 14-19 9-17 1-13-6-17-10Z' });
  add('shields', 'text', { x, y: y + 6.5, class: 'num us' }, String(n));
});
```
